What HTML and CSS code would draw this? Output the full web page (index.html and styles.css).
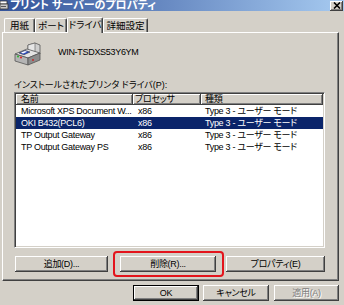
FILE: index.html
```html
<!DOCTYPE html>
<html lang="ja">
<head>
<meta charset="utf-8">
<link rel="stylesheet" href="styles.css">
</head>
<body>
<div class="window">
  <div class="titlebar">
    <svg class="ticon" width="9" height="11" viewBox="0 0 9 11">
      <rect x="0" y="1" width="7" height="3" fill="#fff" stroke="#333" stroke-width="0.8"/>
      <rect x="0" y="4" width="8" height="5" fill="#c8c8c8" stroke="#333" stroke-width="0.8"/>
      <rect x="1" y="6" width="5" height="1" fill="#555"/>
    </svg>
    <span class="title">プリント サーバーのプロパティ</span>
    <span class="close">
      <svg width="8" height="7" viewBox="0 0 8 7"><path d="M1 0.5 L7 6.5 M7 0.5 L1 6.5" stroke="#000" stroke-width="1.6"/></svg>
    </span>
  </div>
  <div class="tabs">
    <div class="tab t1">用紙</div>
    <div class="tab t2">ポート</div>
    <div class="tab t3 active">ドライバ</div>
    <div class="tab t4">詳細設定</div>
  </div>
  <div class="panel">
    <div class="server">
      <svg class="printer" width="28" height="24" viewBox="0 0 28 24">
        <polygon points="15,3 22,1 27,3 27,12 20,14 15,12" fill="#cfcfcf" stroke="#555" stroke-width="0.8"/>
        <polygon points="15,3 22,1 22,10 15,12" fill="#e6e6e6" stroke="#555" stroke-width="0.6"/>
        <polygon points="2,12 14,7 27,11 15,16" fill="#e4e4e4" stroke="#555" stroke-width="0.8"/>
        <polygon points="2,12 15,16 15,23 2,19" fill="#b4b4b4" stroke="#555" stroke-width="0.8"/>
        <polygon points="15,16 27,11 27,18 15,23" fill="#8c8c8c" stroke="#555" stroke-width="0.8"/>
        <polygon points="6,11 12,8.5 17,10 11,12.8" fill="#2f4fc4" stroke="#223" stroke-width="0.5"/>
        <polygon points="8,10.5 12,9 14,9.8 10,11.4" fill="#fff"/>
        <circle cx="5" cy="14.5" r="1" fill="#2cb52c"/>
        <circle cx="8" cy="15.4" r="1" fill="#d22"/>
        <circle cx="20" cy="18" r="0.9" fill="#c22"/>
      </svg>
      <span class="sname">WIN-TSDXS53Y6YM</span>
    </div>
    <div class="label">インストールされたプリンタ ドライバ(P):</div>
    <div class="list">
      <div class="lhead">
        <div class="hcell c1">名前</div>
        <div class="hcell c2">プロセッサ</div>
        <div class="hcell c3">種類</div>
      </div>
      <div class="row"><span class="cell c1">Microsoft XPS Document W...</span><span class="cell c2">x86</span><span class="cell c3">Type 3 - ユーザー モード</span></div>
      <div class="row selected"><span class="cell c1">OKI B432(PCL6)</span><span class="cell c2">x86</span><span class="cell c3">Type 3 - ユーザー モード</span></div>
      <div class="row"><span class="cell c1">TP Output Gateway</span><span class="cell c2">x86</span><span class="cell c3">Type 3 - ユーザー モード</span></div>
      <div class="row"><span class="cell c1">TP Output Gateway PS</span><span class="cell c2">x86</span><span class="cell c3">Type 3 - ユーザー モード</span></div>
    </div>
    <div class="btnrow">
      <button class="btn b-add">追加(D)...</button>
      <div class="hl"><button class="btn b-del">削除(R)...</button></div>
      <button class="btn b-prop">プロパティ(E)</button>
    </div>
  </div>
  <div class="footer">
    <button class="btn b-ok">OK</button>
    <button class="btn b-cancel">キャンセル</button>
    <button class="btn b-apply" disabled>適用(A)</button>
  </div>
</div>
</body>
</html>
```
FILE: styles.css
```css
* { box-sizing: border-box; margin: 0; padding: 0; }
html, body { width: 344px; height: 305px; overflow: hidden; }
body {
  background: #d4d0c8;
  font-family: "Liberation Sans", "Noto Sans CJK JP", sans-serif;
  font-size: 9px;
  letter-spacing: -0.3px;
  color: #000;
  font-feature-settings: "palt";
}
.window { display: flex; flex-direction: column; width: 344px; height: 305px; }

.titlebar {
  display: flex;
  align-items: center;
  height: 11px;
  background: linear-gradient(to right, #34549a 0%, #6a8cc4 50%, #a6caf0 100%);
  color: #fff;
}
.ticon { flex: none; }
.title { font-weight: bold; font-size: 11px; letter-spacing: 0; margin-left: 1px; line-height: 11px; }
.close {
  margin-left: auto;
  margin-right: 1px;
  width: 13px;
  height: 10px;
  display: flex;
  align-items: center;
  justify-content: center;
  background: #d4d0c8;
  box-shadow: inset -1px -1px #404040, inset 1px 1px #fff, inset -2px -2px #808080;
}

.tabs {
  display: flex;
  align-items: flex-end;
  height: 21px;
  padding-left: 4px;
}
.tab {
  height: 14px;
  display: flex;
  align-items: center;
  justify-content: center;
  border: 1px solid #fff;
  border-bottom: none;
  border-right-color: #404040;
  box-shadow: inset -1px 0 #808080;
  border-radius: 2px 2px 0 0;
  line-height: 11px;
  font-size: 9.5px;
  letter-spacing: 0;
}
.t1 { width: 31px; }
.t2 { width: 32px; }
.t3 { width: 36px; }
.t4 { width: 45px; }
.tab.active {
  height: 16px;
  margin-bottom: -1px;
  background: #d4d0c8;
  position: relative;
  z-index: 1;
  padding-bottom: 2px;
}

.panel {
  margin-left: 2px;
  width: 337px;
  height: 249px;
  border: 1px solid #fff;
  border-right-color: #404040;
  border-bottom-color: #404040;
  box-shadow: inset -1px -1px #808080;
  padding: 9px 0 0 11px;
  display: flex;
  flex-direction: column;
}
.server { display: flex; align-items: flex-start; height: 24px; }
.printer { margin-left: -1px; flex: none; }
.sname { margin-left: 17px; margin-top: 5px; line-height: 11px; }
.label { margin-top: 14px; line-height: 11px; height: 11px; letter-spacing: 0; }

.list {
  margin-top: 1px;
  width: 311px;
  height: 156px;
  background: #fff;
  border: 1px solid #808080;
  border-right-color: #fff;
  border-bottom-color: #fff;
  box-shadow: inset 1px 1px #404040, inset -1px -1px #d4d0c8;
  padding: 1px;
}
.lhead { display: flex; height: 11px; }
.hcell {
  background: #d4d0c8;
  box-shadow: inset -1px -1px #404040, inset 1px 1px #fff, inset -2px -2px #808080;
  line-height: 11px;
  padding-left: 5px;
}
.c1 { width: 117px; flex: none; }
.c2 { width: 68px; flex: none; }
.c3 { width: 122px; flex: none; }
.hcell.c2 { padding-left: 2px; }
.hcell.c3 { padding-left: 4px; }
.row { display: flex; height: 12px; align-items: center; line-height: 12px; }
.cell { white-space: nowrap; padding-left: 5px; }
.cell.c3 { padding-left: 4px; }
.row.selected { background: #0a246a; color: #fff; }

.btnrow { display: flex; margin-top: 8px; padding-left: 1px; }
.btn {
  font: inherit;
  letter-spacing: inherit;
  color: #000;
  background: #d4d0c8;
  border: none;
  height: 16px;
  display: flex;
  align-items: center;
  justify-content: center;
  box-shadow: inset -1px -1px #404040, inset 1px 1px #fff, inset -2px -2px #808080;
  line-height: 11px;
}
.b-add { width: 93px; }
.hl { position: relative; margin-left: 12px; }
.hl::after {
  content: "";
  position: absolute;
  left: -7px;
  right: -8px;
  top: -5px;
  bottom: -5px;
  border: 2px solid #e3141c;
  border-radius: 4px;
}
.b-del { width: 96px; }
.b-prop { width: 99px; margin-left: 10px; }

.footer { display: flex; justify-content: flex-end; padding-right: 5px; margin-top: 4px; }
.b-ok {
  width: 66px;
  box-shadow: inset 0 0 0 1px #000, inset -2px -2px #404040, inset 2px 2px #fff, inset -3px -3px #808080;
}
.b-cancel { width: 66px; margin-left: 4px; }
.b-apply { width: 65px; margin-left: 5px; color: #808080; text-shadow: 1px 1px #fff; }
```
